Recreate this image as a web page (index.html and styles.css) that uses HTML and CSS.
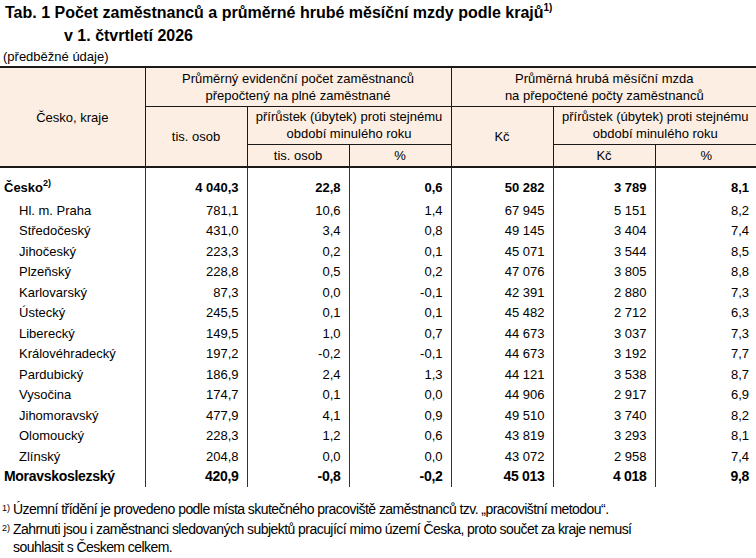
FILE: index.html
```html
<!DOCTYPE html>
<html lang="cs">
<head>
  <meta charset="UTF-8">
  <title>Tab. 1 Počet zaměstnanců a průměrné hrubé měsíční mzdy podle krajů</title>
  <link rel="stylesheet" href="styles.css">
</head>
<body>
  <h1 class="title">
    <span class="title-line">Tab. 1 Počet zaměstnanců a průměrné hrubé měsíční mzdy podle krajů<sup>1)</sup></span>
    <span class="title-line title-indent">v 1. čtvrtletí 2026</span>
  </h1>
  <p class="note">(předběžné údaje)</p>

  <table class="wages">
    <colgroup>
      <col class="c-name">
      <col class="c-num"><col class="c-num"><col class="c-num">
      <col class="c-num"><col class="c-num"><col class="c-num">
    </colgroup>
    <thead>
      <tr class="h1">
        <th rowspan="3" class="name-head">Česko, kraje</th>
        <th colspan="3" class="group">Průměrný evidenční počet zaměstnanců<br>přepočtený na plné zaměstnané</th>
        <th colspan="3" class="group">Průměrná hrubá měsíční mzda<br>na přepočtené počty zaměstnanců</th>
      </tr>
      <tr class="h2">
        <th rowspan="2">tis. osob</th>
        <th colspan="2">přírůstek (úbytek) proti stejnému<br>období minulého roku</th>
        <th rowspan="2" class="group">Kč</th>
        <th colspan="2">přírůstek (úbytek) proti stejnému<br>období minulého roku</th>
      </tr>
      <tr class="h3">
        <th>tis. osob</th>
        <th>%</th>
        <th>Kč</th>
        <th>%</th>
      </tr>
    </thead>
    <tbody>
      <tr class="total first">
        <td class="name">Česko<sup>2)</sup></td>
        <td>4 040,3</td><td>22,8</td><td>0,6</td><td>50 282</td><td>3 789</td><td>8,1</td>
      </tr>
      <tr><td class="name sub">Hl. m. Praha</td><td>781,1</td><td>10,6</td><td>1,4</td><td>67 945</td><td>5 151</td><td>8,2</td></tr>
      <tr><td class="name sub">Středočeský</td><td>431,0</td><td>3,4</td><td>0,8</td><td>49 145</td><td>3 404</td><td>7,4</td></tr>
      <tr><td class="name sub">Jihočeský</td><td>223,3</td><td>0,2</td><td>0,1</td><td>45 071</td><td>3 544</td><td>8,5</td></tr>
      <tr><td class="name sub">Plzeňský</td><td>228,8</td><td>0,5</td><td>0,2</td><td>47 076</td><td>3 805</td><td>8,8</td></tr>
      <tr><td class="name sub">Karlovarský</td><td>87,3</td><td>0,0</td><td>-0,1</td><td>42 391</td><td>2 880</td><td>7,3</td></tr>
      <tr><td class="name sub">Ústecký</td><td>245,5</td><td>0,1</td><td>0,1</td><td>45 482</td><td>2 712</td><td>6,3</td></tr>
      <tr><td class="name sub">Liberecký</td><td>149,5</td><td>1,0</td><td>0,7</td><td>44 673</td><td>3 037</td><td>7,3</td></tr>
      <tr><td class="name sub">Královéhradecký</td><td>197,2</td><td>-0,2</td><td>-0,1</td><td>44 673</td><td>3 192</td><td>7,7</td></tr>
      <tr><td class="name sub">Pardubický</td><td>186,9</td><td>2,4</td><td>1,3</td><td>44 121</td><td>3 538</td><td>8,7</td></tr>
      <tr><td class="name sub">Vysočina</td><td>174,7</td><td>0,1</td><td>0,0</td><td>44 906</td><td>2 917</td><td>6,9</td></tr>
      <tr><td class="name sub">Jihomoravský</td><td>477,9</td><td>4,1</td><td>0,9</td><td>49 510</td><td>3 740</td><td>8,2</td></tr>
      <tr><td class="name sub">Olomoucký</td><td>228,3</td><td>1,2</td><td>0,6</td><td>43 819</td><td>3 293</td><td>8,1</td></tr>
      <tr><td class="name sub">Zlínský</td><td>204,8</td><td>0,0</td><td>0,0</td><td>43 072</td><td>2 958</td><td>7,4</td></tr>
      <tr class="last">
        <td class="name">Moravskoslezský</td>
        <td>420,9</td><td>-0,8</td><td>-0,2</td><td>45 013</td><td>4 018</td><td>9,8</td>
      </tr>
    </tbody>
  </table>

  <!-- Poznámky pod tabulkou -->
  <div class="footnotes">
    <p class="fn"><sup>1)</sup>Územní třídění je provedeno podle místa skutečného pracoviště zaměstnanců tzv. „pracovištní metodou“.</p>
    <p class="fn"><sup>2)</sup>Zahrnuti jsou i zaměstnanci sledovaných subjektů pracující mimo území Česka, proto součet za kraje nemusí souhlasit s Českem celkem.</p>
  </div>
</body>
</html>
```

FILE: styles.css
```css
/* Tabulka ČSÚ - mzdy podle krajů */
:root {
  --head-bg: #fdeee3;
  --line: #1a1a1a;
  --text: #000;
}

body {
  margin: 0;
  font-family: "Liberation Sans", Arial, sans-serif;
  color: var(--text);
  background: #fff;
}

/* Nadpis */
.title {
  margin: 0;
  padding: 1px 0 0 5px;
  font-size: 16px;
  line-height: 23px;
  font-weight: bold;
}

.title-line {
  display: block;
}

.title-indent {
  padding-left: 59px;
}

.title sup {
  font-size: 10px;
  vertical-align: 7px;
  line-height: 0;
}

.note {
  margin: 0;
  padding-left: 3px;
  font-size: 13px;
  line-height: 19px;
}

/* Tabulka */
.wages {
  width: 756px;
  border-collapse: collapse;
  table-layout: fixed;
  font-size: 13px;
  line-height: 17px;
}

.c-name { width: 145px; }
.c-num { width: 102px; }

.wages th {
  background: var(--head-bg);
  font-weight: normal;
  text-align: center;
  padding: 0 2px;
  border: 1px solid var(--line);
}

.wages thead tr:first-child th {
  border-top: 2px solid var(--line);
}

.wages th:last-child,
.wages td:last-child {
  border-right: none;
}

.name-head {
  border-left: none !important;
}

.h1 { height: 39px; }
.h2 { height: 38px; }
.h3 { height: 23px; }

.h3 th,
.h2 th[rowspan],
.name-head {
  border-bottom: 2px solid var(--line) !important;
}

.wages td {
  text-align: right;
  padding: 0 8px 0 2px;
  height: 20.5px;
  border-left: 1px solid #333;
  white-space: nowrap;
}

.wages td.name {
  text-align: left;
  border-left: none;
  padding-left: 4px;
}

.wages td.sub {
  padding-left: 19px;
}

.total td {
  font-weight: bold;
}

.first td {
  height: 26px;
  padding-top: 6px;
}

.total sup {
  font-size: 9px;
  vertical-align: 6px;
  line-height: 0;
}

.last td {
  font-weight: bold;
  font-size: 14px;
  letter-spacing: -0.3px;
}

/* Poznámky */
.footnotes {
  margin-top: 13px;
  padding-left: 13px;
  width: 650px;
  font-size: 14px;
  line-height: 18px;
  letter-spacing: -0.55px;
}

.fn {
  margin: 0 0 2px;
  position: relative;
}

.fn sup {
  position: absolute;
  left: -11px;
  top: 4px;
  font-size: 9px;
  line-height: 1;
  letter-spacing: 0;
}
```
